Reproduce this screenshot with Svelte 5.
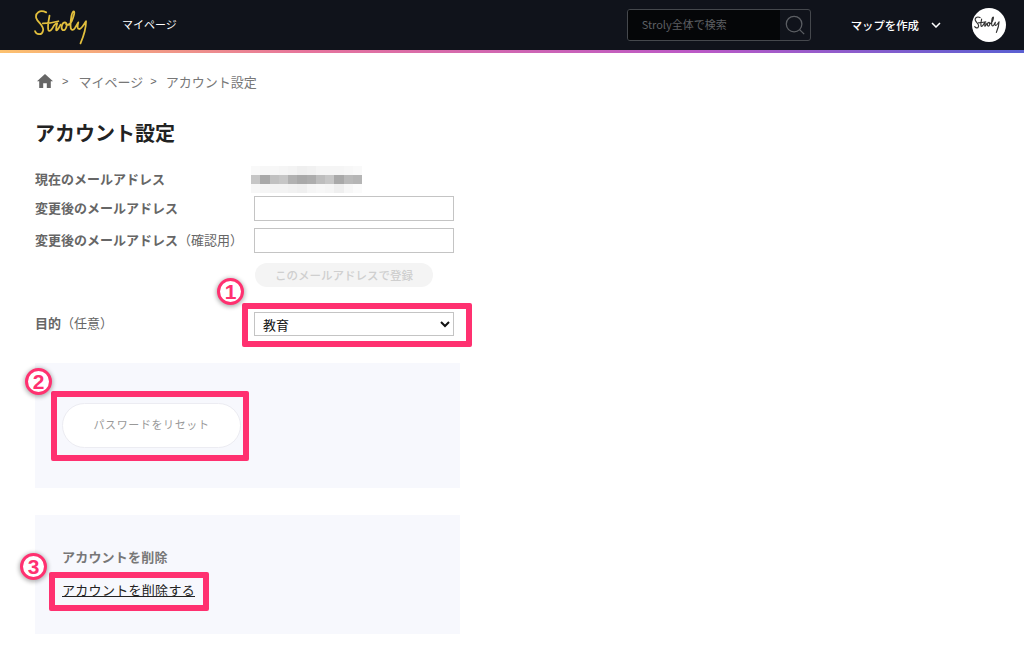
<script lang="ts">
  const dark = [0.28, 0.42, 0.3, 0.28, 0.38, 0.42, 0.4, 0.32, 0.28, 0.42, 0.34, 0.36];
  const top = [0.03, 0.04, 0.04, 0.05, 0.06, 0.08, 0.07, 0.05, 0.05, 0.05, 0.04, 0.03];
  const bottom = [0.04, 0.05, 0.06, 0.06, 0.07, 0.08, 0.05, 0.04, 0.05, 0.08, 0.04, 0.02];
  const cells = [...top, ...dark, ...bottom];
</script>

<div class="page">
  <header class="topbar">
    <div class="nav-left">
      <svg class="logo" viewBox="0 0 56 36" width="62" height="40" fill="none" stroke="#e2bf3d" stroke-width="1.6" stroke-linecap="round" stroke-linejoin="round">
        <path d="M11 3C5 0 1 4 2 8c1 4 8 7 6 12-1 4-6 3-7 0" />
        <path d="M8 13c5 0 10-1 14-2M14 6c-1 5-2 10-1 13 1 2 3 0 5-4 1-1 1-2 3-2-1 2-1 5-1 6 1 1 3-3 4-5" />
        <path d="M28 12c-3 0-4 6-2 7 3 1 5-6 2-7zM29 14c2 1 4-1 5-3 2-4 3-9 2-9-2 0-3 8-3 13 0 4 2 5 4 2l3-5c-1 4-1 6 1 6s4-4 6-7c0 5-2 13-5 20" />
      </svg>
      <span class="nav-link">マイページ</span>
    </div>
    <div class="nav-right">
      <div class="search">
        <span class="search-input">Stroly全体で検索</span>
        <span class="search-btn">
          <svg viewBox="0 0 24 24" width="22" height="22" fill="none" stroke="#5b5e63" stroke-width="1.4">
            <circle cx="11" cy="11" r="8.5" />
            <path d="M17 17l5 5" />
          </svg>
        </span>
      </div>
      <div class="create">
        <span>マップを作成</span>
        <svg viewBox="0 0 10 6" width="10" height="6" fill="none" stroke="#fff" stroke-width="1.5">
          <path d="M1 1l4 4 4-4" />
        </svg>
      </div>
      <div class="avatar">
        <svg viewBox="0 0 56 36" width="30" height="19" fill="none" stroke="#333" stroke-width="2.2" stroke-linecap="round" stroke-linejoin="round">
          <path d="M11 3C5 0 1 4 2 8c1 4 8 7 6 12-1 4-6 3-7 0" />
          <path d="M8 13c5 0 10-1 14-2M14 6c-1 5-2 10-1 13 1 2 3 0 5-4 1-1 1-2 3-2-1 2-1 5-1 6 1 1 3-3 4-5" />
          <path d="M28 12c-3 0-4 6-2 7 3 1 5-6 2-7zM29 14c2 1 4-1 5-3 2-4 3-9 2-9-2 0-3 8-3 13 0 4 2 5 4 2l3-5c-1 4-1 6 1 6s4-4 6-7c0 5-2 13-5 20" />
        </svg>
      </div>
    </div>
  </header>
  <div class="rainbow"></div>

  <main class="content">
    <nav class="crumbs">
      <svg class="home" viewBox="0 0 16 14" width="16" height="14" fill="#666">
        <path d="M8 0L0 7.2h2.2V14h4V9.2h3.6V14h4V7.2H16z" />
      </svg>
      <span class="sep">&gt;</span>
      <span>マイページ</span>
      <span class="sep">&gt;</span>
      <span>アカウント設定</span>
    </nav>

    <h1>アカウント設定</h1>

    <div class="row current">
      <span class="label">現在のメールアドレス</span>
      <div class="mosaic">
        {#each cells as alpha}
          <i style="opacity: {alpha}"></i>
        {/each}
      </div>
    </div>
    <div class="row first">
      <span class="label">変更後のメールアドレス</span>
      <input type="text" />
    </div>
    <div class="row second">
      <span class="label">変更後のメールアドレス<em>（確認用）</em></span>
      <input type="text" />
    </div>
    <div class="row submit">
      <span></span>
      <button class="submit-btn" disabled>このメールアドレスで登録</button>
    </div>
    <div class="row purpose">
      <span class="label"><b>目的</b><em>（任意）</em></span>
      <select>
        <option>教育</option>
      </select>
    </div>

    <section class="panel reset">
      <button class="reset-btn">パスワードをリセット</button>
    </section>

    <section class="panel remove">
      <h2>アカウントを削除</h2>
      <a href="#top">アカウントを削除する</a>
    </section>
  </main>

  <div class="mark mark-1"></div>
  <div class="mark mark-2"></div>
  <div class="mark mark-3"></div>
  <span class="badge badge-1">1</span>
  <span class="badge badge-2">2</span>
  <span class="badge badge-3">3</span>
</div>

<style>
  :global(body) { margin: 0; background: #fff; }
  .page { position: relative; height: 657px; overflow: hidden; font-family: "Noto Sans CJK JP", "Liberation Sans", sans-serif; color: #666; }

  .topbar { height: 50px; background: #10131b; display: flex; align-items: center; justify-content: space-between; padding: 0 18px 0 34px; box-sizing: border-box; }
  .rainbow { height: 3px; background: linear-gradient(90deg, #fcc16e 0%, #e6749c 30%, #bb59c6 68%, #5a60d2 100%); }
  .nav-left { display: flex; align-items: center; }
  .logo { margin-right: 26px; margin-top: 8px; }
  .nav-link { color: #fff; font-size: 11px; padding-bottom: 2px; }
  .nav-right { display: flex; align-items: center; }
  .search { width: 184px; height: 32px; box-sizing: border-box; border: 1px solid #45484d; border-radius: 3px; display: flex; overflow: hidden; }
  .search-input { flex: 1; background: #050608; color: #5d5f63; font-size: 11px; line-height: 28px; padding-left: 14px; }
  .search-btn { width: 30px; display: flex; align-items: center; justify-content: center; }
  .create { display: flex; align-items: center; gap: 12px; color: #fff; font-size: 11.4px; font-weight: 500; margin-left: 40px; }
  .avatar { width: 34px; height: 34px; border-radius: 50%; background: #fff; margin-left: 31px; display: flex; align-items: center; justify-content: center; }

  .content { padding-left: 35px; width: 425px; }
  .crumbs { height: 18px; margin-top: 19px; display: flex; align-items: center; font-size: 13px; color: #777; }
  .home { margin-left: 2px; }
  .sep { font-size: 11px; margin: 0 9px 0 7px; color: #666; font-family: "Liberation Sans", sans-serif; }
  .crumbs .sep:first-of-type { margin: 0 10px 0 9px; }
  h1 { margin: 29px 0 0; font-size: 20px; line-height: 28px; font-weight: 700; color: #222; }

  .row { display: grid; grid-template-columns: 219px 200px; align-items: center; }
  .label { font-size: 13px; font-weight: 700; color: #666; white-space: nowrap; padding-bottom: 3px; }
  .label em { font-style: normal; font-weight: 400; }
  .label b { font-weight: 700; }
  .current { margin-top: 19px; }
  .first { margin-top: 3px; }
  .second { margin-top: 7px; }
  .submit { margin-top: 10px; }
  .purpose { margin-top: 25px; }
  .purpose .label { font-weight: 400; }

  .mosaic { display: grid; grid-template-columns: repeat(12, 9.25px); grid-auto-rows: 9px; margin-left: -3px; }
  .mosaic i { background: #333; }

  input { width: 200px; height: 25px; box-sizing: border-box; border: 1px solid #c4c4c4; background: #fff; }
  select { width: 200px; height: 24px; box-sizing: border-box; border: 1px solid #c4c4c4; border-radius: 0; background: #fff; color: #111; font-family: inherit; font-size: 13px; padding-left: 4px; }
  .submit-btn { width: 178px; height: 24px; margin-left: 1px; border: 0; border-radius: 12px; background: #f4f4f4; color: #cfcfcf; font-family: inherit; font-size: 11.5px; font-weight: 500; padding: 0; }

  .panel { background: #f7f8fd; box-sizing: border-box; }
  .reset { height: 125px; margin-top: 27px; padding: 40px 27px; }
  .reset-btn { display: block; width: 179px; height: 45px; border: 1px solid #ececf2; border-radius: 23px; background: #fff; color: #999; font-family: inherit; font-size: 11px; letter-spacing: 0.6px; padding: 0 0 3px; }
  .remove { height: 119px; margin-top: 27px; padding: 32px 27px 0; }
  h2 { margin: 0; font-size: 13px; letter-spacing: 0.2px; line-height: 20px; font-weight: 700; color: #777; }
  .remove a { display: inline-block; margin-top: 13px; font-size: 13px; letter-spacing: 0.3px; line-height: 20px; color: #222; }

  .mark { position: absolute; box-sizing: border-box; border: 6px solid #ff3170; border-radius: 2px; }
  .mark-1 { left: 242px; top: 303px; width: 230px; height: 44px; }
  .mark-2 { left: 51px; top: 391px; width: 198px; height: 70px; }
  .mark-3 { left: 49px; top: 572px; width: 160px; height: 39px; }

  .badge { position: absolute; width: 27px; height: 27px; box-sizing: border-box; border: 3px solid #ff3170; border-radius: 50%; background: #fff; box-shadow: 0 1px 4px 1px rgba(0, 0, 0, 0.3); color: #ff3170; font-family: "Liberation Sans", sans-serif; font-size: 21px; font-weight: 700; line-height: 21px; text-align: center; }
  .badge-1 { left: 217px; top: 278px; }
  .badge-2 { left: 25px; top: 368px; }
  .badge-3 { left: 20px; top: 553px; }
</style>
